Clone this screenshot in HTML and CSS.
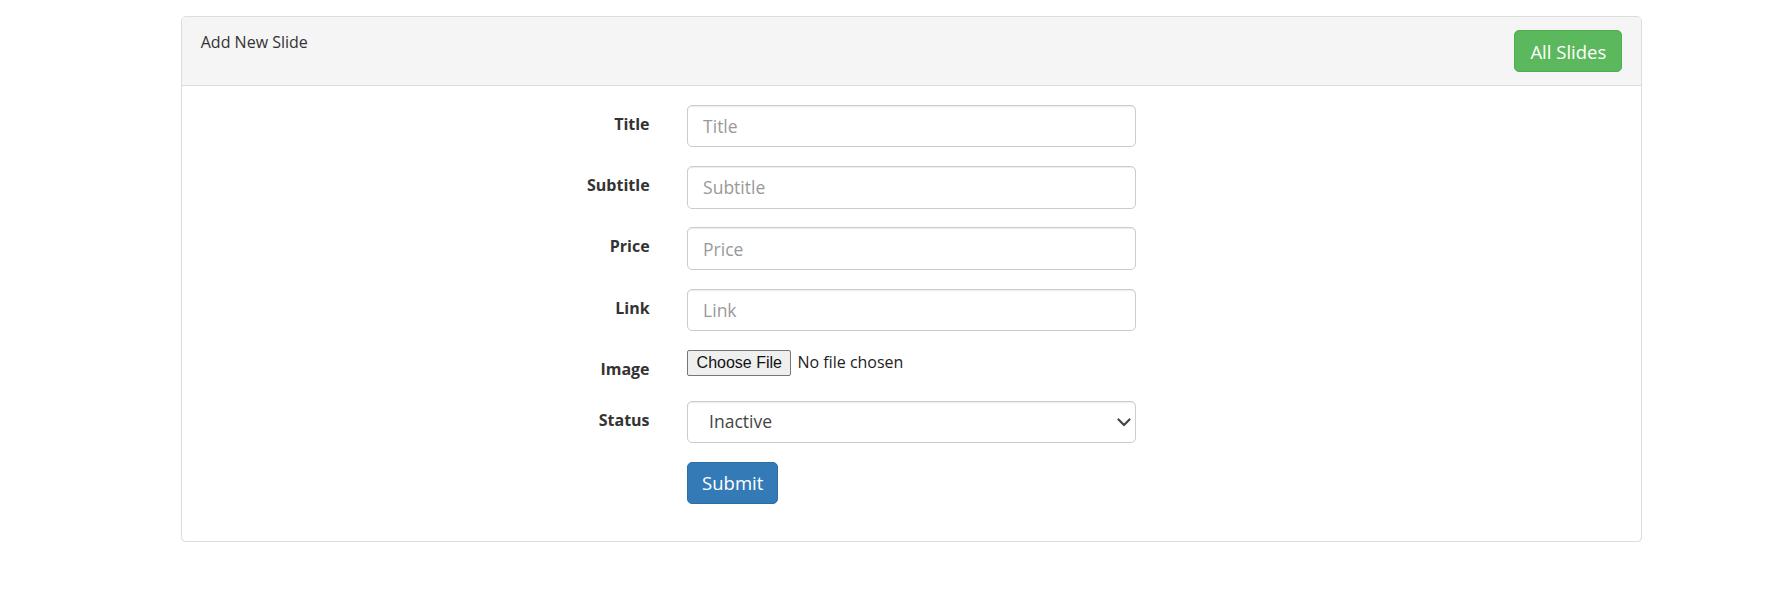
FILE: index.html
```html
<!DOCTYPE html>
<html lang="en">
<head>
<meta charset="utf-8">
<title>Add New Slide</title>
<link rel="stylesheet" href="styles.css">
</head>
<body>
<div class="panel">
  <div class="panel-heading">
    <span class="panel-title">Add New Slide</span>
    <a class="btn btn-success" href="#">All Slides</a>
  </div>
  <div class="panel-body">
    <form class="form">
      <div class="form-group">
        <label class="control-label" for="title">Title</label>
        <div class="control"><input class="form-control" id="title" type="text" placeholder="Title"></div>
      </div>
      <div class="form-group">
        <label class="control-label" for="subtitle">Subtitle</label>
        <div class="control"><input class="form-control" id="subtitle" type="text" placeholder="Subtitle"></div>
      </div>
      <div class="form-group">
        <label class="control-label" for="price">Price</label>
        <div class="control"><input class="form-control" id="price" type="text" placeholder="Price"></div>
      </div>
      <div class="form-group">
        <label class="control-label" for="link">Link</label>
        <div class="control"><input class="form-control" id="link" type="text" placeholder="Link"></div>
      </div>
      <div class="form-group">
        <label class="control-label" for="image">Image</label>
        <div class="control file-control">
          <label class="file">
            <span class="file-btn">Choose File</span><span class="file-name">No file chosen</span>
            <input id="image" class="file-input" type="file">
          </label>
        </div>
      </div>
      <div class="form-group">
        <label class="control-label" for="status">Status</label>
        <div class="control">
          <div class="select-wrap">
            <select class="form-control select" id="status">
              <option>Inactive</option>
              <option>Active</option>
            </select>
            <svg class="chevron" width="14" height="9" viewBox="0 0 14 9" aria-hidden="true"><path d="M1.5 1.5 L7 7 L12.5 1.5" fill="none" stroke="#444" stroke-width="2.2" stroke-linecap="round" stroke-linejoin="round"/></svg>
          </div>
        </div>
      </div>
      <div class="form-group">
        <div class="control offset"><button class="btn btn-primary" type="button">Submit</button></div>
      </div>
    </form>
  </div>
</div>
</body>
</html>
```
FILE: styles.css
```css
* { box-sizing: border-box; }
html, body { margin: 0; padding: 0; background: #fff; }
body {
  font-family: "Open Sans", "Liberation Sans", sans-serif;
  font-size: 16px;
  line-height: 25px;
  color: #333;
}
.panel {
  margin: 16px 0 0 181px;
  width: 1461px;
  border: 1px solid #ddd;
  border-radius: 5px;
  background: #fff;
  box-shadow: 0 1px 1px rgba(0,0,0,.05);
}
.panel-heading {
  display: flex;
  justify-content: space-between;
  align-items: flex-start;
  padding: 13px 18.75px;
  background: #f5f5f5;
  border-bottom: 1px solid #ddd;
  border-radius: 4px 4px 0 0;
}
.panel-title { color: #333; }
.panel-body { padding: 18.75px; }
.btn {
  display: inline-block;
  font-family: "Open Sans", "Liberation Sans", sans-serif;
  font-size: 18.5px;
  line-height: 25px;
  padding: 7.5px 15px;
  border: 1px solid transparent;
  border-radius: 5px;
  color: #fff;
  text-decoration: none;
  cursor: pointer;
}
.btn-success { background: #5cb85c; border-color: #4cae4c; }
.btn-primary { background: #337ab7; border-color: #2e6da4; padding: 7.5px 14px; }
.form-group {
  display: grid;
  grid-template-columns: 1fr 1fr 1fr;
  margin: 0 -18.75px 18.75px;
}
.control-label, .control { padding: 0 18.75px; }
.control-label {
  text-align: right;
  font-weight: 700;
  padding-top: 7px;
  line-height: 25px;
  color: #333;
}
.offset { grid-column: 2; }
.form-control {
  display: block;
  width: 100%;
  height: 42.5px;
  padding: 7.5px 15px;
  font-family: "Open Sans", "Liberation Sans", sans-serif;
  font-size: 17.5px;
  line-height: 25px;
  color: #555;
  background: #fff;
  border: 1px solid #ccc;
  border-radius: 5px;
  box-shadow: inset 0 1px 1px rgba(0,0,0,.075);
}
.form-control::placeholder { color: #999; }
.select-wrap { position: relative; }
.select { appearance: none; -webkit-appearance: none; padding-left: 21px; color: #444; }
.chevron { position: absolute; right: 5px; top: 17px; pointer-events: none; }
.file-control { padding-top: 0; }
.file { display: flex; align-items: center; cursor: pointer; }
.file-btn {
  display: block;
  height: 26px;
  padding: 0 8.5px;
  font-family: "Liberation Sans", Arial, sans-serif;
  font-size: 16px;
  line-height: 24px;
  color: #111;
  background: #efefef;
  border: 1px solid #767676;
  border-radius: 2px;
}
.file-name {
  margin-left: 6px;
  font-size: 16px;
  color: #222;
}
.file-input { display: none; }
```
